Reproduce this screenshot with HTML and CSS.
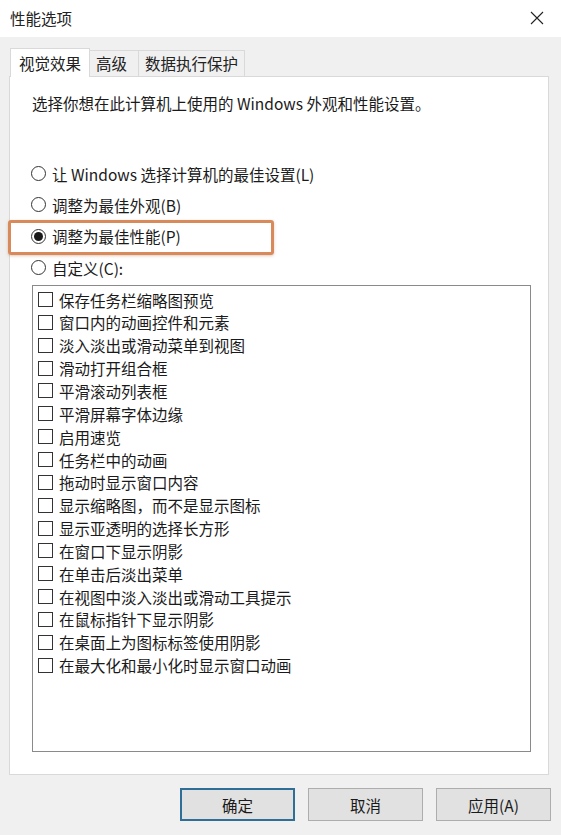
FILE: index.html
```html
<!DOCTYPE html>
<html lang="zh-CN">
<head>
<meta charset="utf-8">
<title>性能选项</title>
<link rel="stylesheet" href="styles.css">
</head>
<body>
<div class="dialog">
  <div class="titlebar">
    <span class="title">性能选项</span>
    <svg class="close" width="14" height="14" viewBox="0 0 14 14"><path d="M1 1 L13 13 M13 1 L1 13" stroke="#222" stroke-width="1.1" fill="none"/></svg>
  </div>
  <div class="tabs">
    <div class="tab active">视觉效果</div>
    <div class="tab tab-adv">高级</div>
    <div class="tab tab-dep">数据执行保护</div>
  </div>
  <div class="panel">
    <p class="intro">选择你想在此计算机上使用的 Windows 外观和性能设置。</p>
    <div class="radios">
      <div class="radio"><span class="circle"></span>让 Windows 选择计算机的最佳设置(L)</div>
      <div class="radio"><span class="circle"></span>调整为最佳外观(B)</div>
      <div class="radio"><span class="circle checked"></span>调整为最佳性能(P)</div>
      <div class="radio"><span class="circle"></span>自定义(C):</div>
    </div>
    <div class="highlight"></div>
    <div class="listbox">
      <div class="item"><span class="box"></span>保存任务栏缩略图预览</div>
      <div class="item"><span class="box"></span>窗口内的动画控件和元素</div>
      <div class="item"><span class="box"></span>淡入淡出或滑动菜单到视图</div>
      <div class="item"><span class="box"></span>滑动打开组合框</div>
      <div class="item"><span class="box"></span>平滑滚动列表框</div>
      <div class="item"><span class="box"></span>平滑屏幕字体边缘</div>
      <div class="item"><span class="box"></span>启用速览</div>
      <div class="item"><span class="box"></span>任务栏中的动画</div>
      <div class="item"><span class="box"></span>拖动时显示窗口内容</div>
      <div class="item"><span class="box"></span>显示缩略图，而不是显示图标</div>
      <div class="item"><span class="box"></span>显示亚透明的选择长方形</div>
      <div class="item"><span class="box"></span>在窗口下显示阴影</div>
      <div class="item"><span class="box"></span>在单击后淡出菜单</div>
      <div class="item"><span class="box"></span>在视图中淡入淡出或滑动工具提示</div>
      <div class="item"><span class="box"></span>在鼠标指针下显示阴影</div>
      <div class="item"><span class="box"></span>在桌面上为图标标签使用阴影</div>
      <div class="item"><span class="box"></span>在最大化和最小化时显示窗口动画</div>
    </div>
  </div>
  <div class="buttons">
    <button class="btn default">确定</button>
    <button class="btn">取消</button>
    <button class="btn">应用(A)</button>
  </div>
</div>
</body>
</html>
```
FILE: styles.css
```css
* { box-sizing: border-box; }
html, body { margin: 0; padding: 0; }
body {
  width: 561px;
  height: 835px;
  background: #f0f0f0;
  font-family: "Noto Sans CJK SC", "Noto Sans", sans-serif;
  font-size: 15.5px;
  color: #1a1a1a;
  overflow: hidden;
}
.dialog { width: 561px; height: 835px; display: flex; flex-direction: column; }
.titlebar {
  height: 37px;
  background: #fff;
  display: flex;
  align-items: center;
  justify-content: space-between;
  padding: 0 17px 0 10px;
}
.title { font-size: 15.5px; line-height: 20px; color: #222; margin-top: -2px; }
.close { display: block; margin-top: -2px; }
.tabs {
  display: flex;
  align-items: flex-end;
  padding-left: 10px;
  margin-top: 11px;
  height: 28px;
  position: relative;
  z-index: 2;
}
.tab {
  height: 26px;
  line-height: 24px;
  padding: 0 6px;
  border: 1px solid #d9d9d9;
  border-bottom: none;
  background: #f0f0f0;
  font-size: 15.5px;
  color: #222;
  margin-left: -1px;
}
.tab.active {
  height: 29px;
  background: #fff;
  padding: 0 8px;
  line-height: 28px;
  margin-bottom: -1px;
  margin-left: 0;
  z-index: 3;
}
.tab-adv { padding: 0 11px 0 6px; }
.tab-dep { padding: 0 6px 0 6px; }
.panel {
  position: relative;
  margin: 0 12px 0 9px;
  height: 699px;
  background: #fff;
  border: 1px solid #d9d9d9;
  padding: 15px 0 0 22px;
}
.intro { margin: 0; line-height: 22px; }
.radios { margin-top: 44px; display: flex; flex-direction: column; }
.radio {
  height: 31.3px;
  display: flex;
  align-items: center;
  margin-left: -1px;
}
.circle {
  width: 15px;
  height: 15px;
  border: 1px solid #333;
  border-radius: 50%;
  margin-right: 6px;
  display: flex;
  align-items: center;
  justify-content: center;
  flex: none;
}
.circle.checked::after {
  content: "";
  width: 9px;
  height: 9px;
  border-radius: 50%;
  background: #1a1a1a;
}
.highlight {
  position: absolute;
  left: -2px;
  top: 143px;
  width: 266px;
  height: 35px;
  border: 3px solid #d98a5b;
  border-radius: 3px;
  box-shadow: 0 1px 3px rgba(160, 100, 60, 0.35);
}
.listbox {
  margin-top: 2px;
  width: 499px;
  height: 467px;
  border: 1px solid #8a8a8a;
  padding: 2px 0 0 5px;
  display: flex;
  flex-direction: column;
}
.item {
  height: 22.85px;
  display: flex;
  align-items: center;
  line-height: 20px;
}
.box {
  width: 15px;
  height: 15px;
  border: 1px solid #333;
  margin-right: 6px;
  flex: none;
}
.buttons {
  display: flex;
  justify-content: flex-end;
  gap: 13px;
  padding-right: 10px;
  margin-top: 13px;
}
.btn {
  width: 115px;
  height: 33px;
  background: #e1e1e1;
  border: 1px solid #adadad;
  font-family: "Noto Sans CJK SC", "Noto Sans", sans-serif;
  font-size: 15.5px;
  color: #1a1a1a;
  padding: 0;
}
.btn.default { border: 2px solid #2e6e97; }
```
